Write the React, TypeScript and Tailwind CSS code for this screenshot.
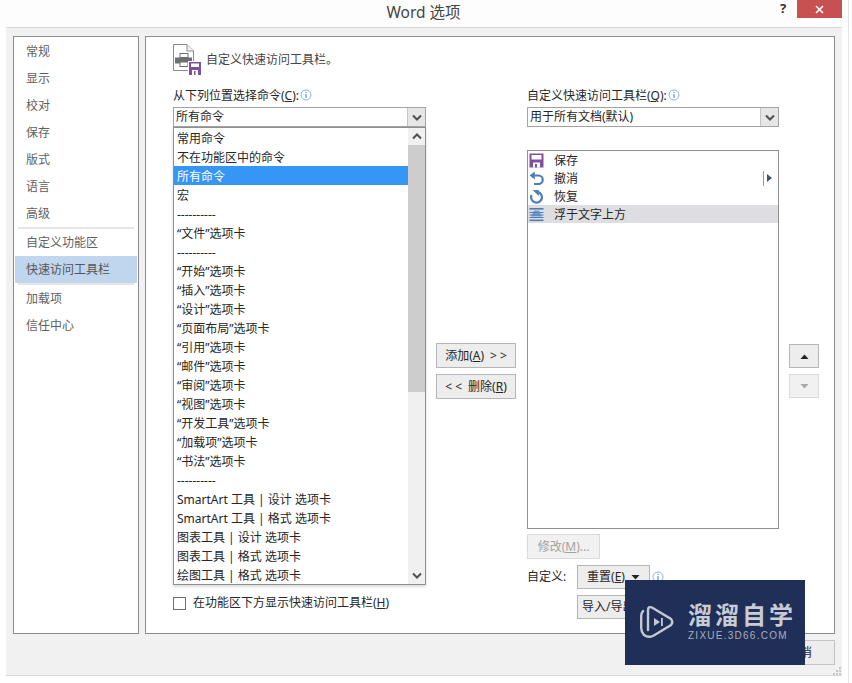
import React from "react";

const font = "font-['Noto_Sans','Noto_Sans_CJK_SC',sans-serif]";

const commands = [
  "常用命令",
  "不在功能区中的命令",
  "所有命令",
  "宏",
  "----------",
  "“文件”选项卡",
  "----------",
  "“开始”选项卡",
  "“插入”选项卡",
  "“设计”选项卡",
  "“页面布局”选项卡",
  "“引用”选项卡",
  "“邮件”选项卡",
  "“审阅”选项卡",
  "“视图”选项卡",
  "“开发工具”选项卡",
  "“加载项”选项卡",
  "“书法”选项卡",
  "----------",
  "SmartArt 工具 | 设计 选项卡",
  "SmartArt 工具 | 格式 选项卡",
  "图表工具 | 设计 选项卡",
  "图表工具 | 格式 选项卡",
  "绘图工具 | 格式 选项卡",
];

function Info() {
  return (
    <svg width="12" height="12" viewBox="0 0 12 12" className="shrink-0">
      <circle cx="6" cy="6" r="5" fill="#fff" stroke="#8fb4dc" />
      <rect x="5.5" y="2.8" width="1" height="1.2" fill="#3f7fc1" />
      <rect x="5.5" y="5" width="1" height="4" fill="#3f7fc1" />
    </svg>
  );
}

function Chevron({ up = false }: { up?: boolean }) {
  return (
    <svg width="10" height="7" viewBox="0 0 10 7">
      <path
        d={up ? "M1 5.5 5 1.5 9 5.5" : "M1 1.5 5 5.5 9 1.5"}
        fill="none"
        stroke="#505050"
        strokeWidth="2"
      />
    </svg>
  );
}

function Combo({ text }: { text: string }) {
  return (
    <div className="flex h-[20px] border border-[#a3a3a3] bg-white">
      <div className="flex-1 pl-[2px] leading-[18px]">{text}</div>
      <div className="flex w-[18px] items-center justify-center border-l border-[#c4c4c4] bg-[#e6e6e6]">
        <Chevron />
      </div>
    </div>
  );
}

function Floppy({ size = 15 }: { size?: number }) {
  return (
    <svg width={size} height={size} viewBox="0 0 15 15">
      <rect x="0.5" y="0.5" width="14" height="14" fill="#80519b" />
      <rect x="2.5" y="2" width="10" height="4.5" fill="#fff" />
      <rect x="4" y="9.5" width="7" height="5" fill="#fff" />
      <rect x="6" y="11" width="2" height="3.5" fill="#80519b" />
    </svg>
  );
}

function Undo() {
  return (
    <svg width="15" height="15" viewBox="0 0 15 15">
      <path d="M3 4.5h6.5a3.9 3.9 0 0 1 0 8.5H5" fill="none" stroke="#4b7db8" strokeWidth="2.2" />
      <path d="M5.8 0.4v8.2L0.6 4.5z" fill="#4b7db8" />
    </svg>
  );
}

function Redo() {
  return (
    <svg width="15" height="15" viewBox="0 0 15 15">
      <path d="M8.5 2.9A5.4 5.4 0 1 1 2.6 6" fill="none" stroke="#4b7db8" strokeWidth="2.2" />
      <path d="M3.6 1h6.2v6z" fill="#4b7db8" />
    </svg>
  );
}

function FloatAbove() {
  return (
    <svg width="15" height="15" viewBox="0 0 15 15">
      <rect x="0.5" y="1" width="14" height="1.6" fill="#4b7db8" />
      <rect x="0.5" y="12.5" width="14" height="1.6" fill="#4b7db8" />
      <path d="M5 3.6h5l3 6H2z" fill="#7f9fc6" />
      <rect x="0.5" y="5" width="14" height="1" fill="#4b7db8" />
      <rect x="0.5" y="7.5" width="14" height="1" fill="#4b7db8" />
      <rect x="0.5" y="10" width="14" height="1" fill="#4b7db8" />
    </svg>
  );
}

function ToolbarDocIcon() {
  return (
    <svg width="29" height="32" viewBox="0 0 29 32">
      <path d="M0.5 0.5H14L20.5 7V26.5H0.5Z" fill="#fff" stroke="#8a8a8a" />
      <path d="M14 0.5V7H20.5" fill="#f2f2f2" stroke="#8a8a8a" />
      <rect x="7" y="9.5" width="8" height="4" fill="#fff" stroke="#6e6e6e" />
      <rect x="2" y="13.5" width="17" height="6" fill="#6e6e6e" />
      <rect x="7" y="18" width="8" height="4.5" fill="#fff" stroke="#6e6e6e" />
      <rect x="15" y="17" width="13.5" height="14.5" fill="#fff" />
      <rect x="16" y="18" width="12" height="13" fill="#80519b" />
      <rect x="18" y="19.5" width="8" height="3.5" fill="#fff" />
      <rect x="19" y="26" width="6" height="5" fill="#fff" />
      <rect x="21" y="27" width="1.5" height="4" fill="#80519b" />
    </svg>
  );
}

function Triangle({ up = false, color = "#222" }: { up?: boolean; color?: string }) {
  return (
    <svg width="9" height="5" viewBox="0 0 9 5">
      <path d={up ? "M0.5 5 4.5 0.5 8.5 5z" : "M0.5 0 8.5 0 4.5 4.5z"} fill={color} />
    </svg>
  );
}

function NavItem({ label, active = false }: { label: string; active?: boolean }) {
  return (
    <div
      className={
        "h-[27px] leading-[27px] " +
        (active ? "mx-px bg-[#c0d5ee] pl-[11px] text-[#555]" : "pl-[12px] text-[#5f5f5f]")
      }
    >
      {label}
    </div>
  );
}

function ScrollBar() {
  return (
    <div className="flex w-[17px] flex-col bg-[#f0f0f0]">
      <div className="flex h-[17px] items-center justify-center">
        <Chevron up />
      </div>
      <div className="h-[247px] bg-[#cdcdcd]" />
      <div className="flex-1" />
      <div className="flex h-[17px] items-center justify-center">
        <Chevron />
      </div>
    </div>
  );
}

function Logo() {
  return (
    <svg width="34" height="34" viewBox="0 0 34 34" className="mb-[2px] shrink-0">
      <path
        d="M8 25V5Q8 1 12 2.5L31 14Q33.5 17 31 20L13 31Q8 33 4 30Q1.2 27 1.2 23V11Q1.2 8 3 6"
        fill="none"
        stroke="#c4c8d2"
        strokeWidth="2.4"
        strokeLinecap="round"
      />
      <path d="M14 13v8l6-4z" fill="#c4c8d2" />
      <rect x="21" y="13" width="1.8" height="8" fill="#c4c8d2" />
    </svg>
  );
}

export default function App() {
  return (
    <div className={"relative h-[683px] w-[852px] overflow-hidden bg-white text-[12px] text-[#262626] " + font}>
      <div className="flex h-[27px] items-start bg-[#fdfdfd]">
        <div className="ml-[6px] w-[835px] pt-[2px] text-center text-[15.5px] leading-[20px] text-[#444]">
          Word 选项
        </div>
      </div>
      <div className="absolute top-0 left-[780px] text-[13px] leading-[16px] font-bold text-[#333]">?</div>
      <div className="absolute top-0 left-[797px] flex h-[18px] w-[45px] items-center justify-center bg-[#c75050]">
        <svg width="9" height="9" viewBox="0 0 9 9">
          <path d="M1 1l7 7M8 1l-7 7" stroke="#fff" strokeWidth="1.6" />
        </svg>
      </div>

      <div className="ml-[6px] h-[649px] w-[836px] border-t border-b border-[#d8d8d8] bg-[#f1f1f1] pt-[8px] pl-[7px]">
        <div className="flex gap-[6px]">
          <div className="h-[598px] w-[126px] border border-[#8c8c8c] bg-white pt-px">
            {["常规", "显示", "校对", "保存", "版式", "语言", "高级"].map((x) => (
              <NavItem key={x} label={x} />
            ))}
            <div className="mx-[4px] h-[2px] bg-[#e6e6e6]" />
            <NavItem label="自定义功能区" />
            <NavItem label="快速访问工具栏" active />
            <div className="mx-[4px] h-[2px] bg-[#e6e6e6]" />
            <NavItem label="加载项" />
            <NavItem label="信任中心" />
          </div>

          <div className="h-[598px] w-[690px] border border-[#8c8c8c] bg-white pt-[7px] pl-[27px]">
            <div className="flex h-[32px] items-center gap-[4px]">
              <ToolbarDocIcon />
              <span className="mb-px text-[#444]">自定义快速访问工具栏。</span>
            </div>

            <div className="mt-[11px] flex">
              <div className="w-[253px]">
                <div className="flex h-[16px] items-center gap-[1px] leading-[16px]">
                  <span className="pt-[2px]">
                    从下列位置选择命令(<u>C</u>):
                  </span>
                  <Info />
                </div>
                <div className="mt-[4px]">
                  <Combo text="所有命令" />
                </div>
                <div className="flex h-[458px] border border-[#8f8f8f] bg-white shadow-[0_2px_3px_rgba(0,0,0,0.15)]">
                  <div className="flex-1">
                    {commands.map((c, i) => (
                      <div
                        key={i}
                        className={
                          "h-[19px] pt-[2px] pl-[3px] leading-[17px] " + (i === 2 ? "bg-[#3696f5] text-white" : "")
                        }
                      >
                        {c}
                      </div>
                    ))}
                  </div>
                  <ScrollBar />
                </div>
                <div className="mt-[11px] flex h-[14px] items-center gap-[7px]">
                  <div className="h-[13px] w-[13px] border border-[#6e6e6e] bg-white" />
                  <span>
                    在功能区下方显示快速访问工具栏(<u>H</u>)
                  </span>
                </div>
              </div>

              <div className="ml-[10px] flex w-[80px] flex-col gap-[6px] pt-[256px]">
                <div className="flex h-[25px] items-center justify-center gap-[6px] border border-[#b5b5b5] bg-[#ededed]">
                  <span>
                    添加(<u>A</u>)
                  </span>
                  <span>&gt; &gt;</span>
                </div>
                <div className="flex h-[25px] items-center justify-center gap-[6px] border border-[#b5b5b5] bg-[#ededed]">
                  <span>&lt; &lt;</span>
                  <span>
                    删除(<u>R</u>)
                  </span>
                </div>
              </div>

              <div className="ml-[11px] w-[252px]">
                <div className="flex h-[16px] items-center gap-[1px] leading-[16px]">
                  <span className="pt-[2px]">
                    自定义快速访问工具栏(<u>Q</u>):
                  </span>
                  <Info />
                </div>
                <div className="mt-[4px]">
                  <Combo text="用于所有文档(默认)" />
                </div>
                <div className="mt-[23px] h-[379px] border border-[#8f8f8f] bg-white">
                  <div className="flex h-[18px] items-center pl-px">
                    <Floppy />
                    <span className="ml-[10px] pt-[2px]">保存</span>
                  </div>
                  <div className="flex h-[18px] items-center pl-px">
                    <Undo />
                    <span className="ml-[10px] flex-1 pt-[2px]">撤消</span>
                    <div className="mr-[6px] flex h-[15px] items-center gap-[3px] border-l border-[#9a9a9a] pl-[3px]">
                      <svg width="5" height="8" viewBox="0 0 5 8">
                        <path d="M0 0 5 4 0 8z" fill="#44546a" />
                      </svg>
                    </div>
                  </div>
                  <div className="flex h-[18px] items-center pl-px">
                    <Redo />
                    <span className="ml-[10px] pt-[2px]">恢复</span>
                  </div>
                  <div className="flex h-[18px] items-center bg-[#dedee2] pl-px">
                    <FloatAbove />
                    <span className="ml-[10px] pt-[2px]">浮于文字上方</span>
                  </div>
                </div>
                <div className="mt-[5px] flex h-[25px] w-[73px] items-center justify-center border border-[#dadada] bg-[#f1f1f1] text-[#a3a3a3]">
                  <span>
                    修改(<u>M</u>)...
                  </span>
                </div>
                <div className="mt-[6px] flex h-[24px] items-center">
                  <span className="w-[50px]">自定义:</span>
                  <div className="flex h-[24px] w-[73px] items-center justify-center gap-[6px] border border-[#b5b5b5] bg-[#ededed]">
                    <span>
                      重置(<u>E</u>)
                    </span>
                    <Triangle />
                  </div>
                  <div className="ml-[2px]">
                    <Info />
                  </div>
                </div>
                <div className="mt-[6px] ml-[50px] flex h-[24px] w-[100px] items-center border border-[#b5b5b5] bg-[#ededed] pl-[4px]">
                  <span>
                    导入/导出(<u>P</u>)
                  </span>
                </div>
              </div>

              <div className="ml-[10px] flex w-[30px] flex-col gap-[6px] pt-[257px]">
                <div className="flex h-[24px] items-center justify-center border border-[#b5b5b5] bg-[#ededed]">
                  <Triangle up />
                </div>
                <div className="flex h-[24px] items-center justify-center border border-[#dadada] bg-[#f1f1f1]">
                  <Triangle color="#a8a8a8" />
                </div>
              </div>
            </div>
          </div>
        </div>

        <div className="mt-[6px] flex justify-end pr-[7px]">
          <div className="flex h-[25px] w-[70px] items-center justify-center border border-[#c4c4c4] bg-[#ededed]">
            取消
          </div>
        </div>
      </div>

      {/* resize grip */}
      <svg width="8" height="8" viewBox="0 0 8 8" className="absolute top-[667px] left-[833px]">
        <path d="M6 0h2v2H6zM3 3h2v2H3zM6 3h2v2H6zM0 6h2v2H0zM3 6h2v2H3zM6 6h2v2H6z" fill="#c9c9c9" />
      </svg>
      <div className="absolute top-0 left-[848px] h-[683px] w-px bg-[#e4e4e4]" />

      {/* watermark */}
      <div className="absolute top-[580px] left-[625px] flex h-[85px] w-[180px] items-center bg-[#1f2f58] pl-[15px]">
        <Logo />
        <div className="ml-[14px] mb-[3px] flex flex-col items-start">
          <div className="h-[27px] text-[24px] leading-[27px] font-bold tracking-[3px] text-[#c9ccd4]">溜溜自学</div>
          <div className="mt-[2px] h-[12px] font-['Liberation_Sans',sans-serif] text-[10px] leading-[12px] tracking-[1.25px] text-[#a9aebb]">
            ZIXUE.3D66.COM
          </div>
        </div>
      </div>
    </div>
  );
}
